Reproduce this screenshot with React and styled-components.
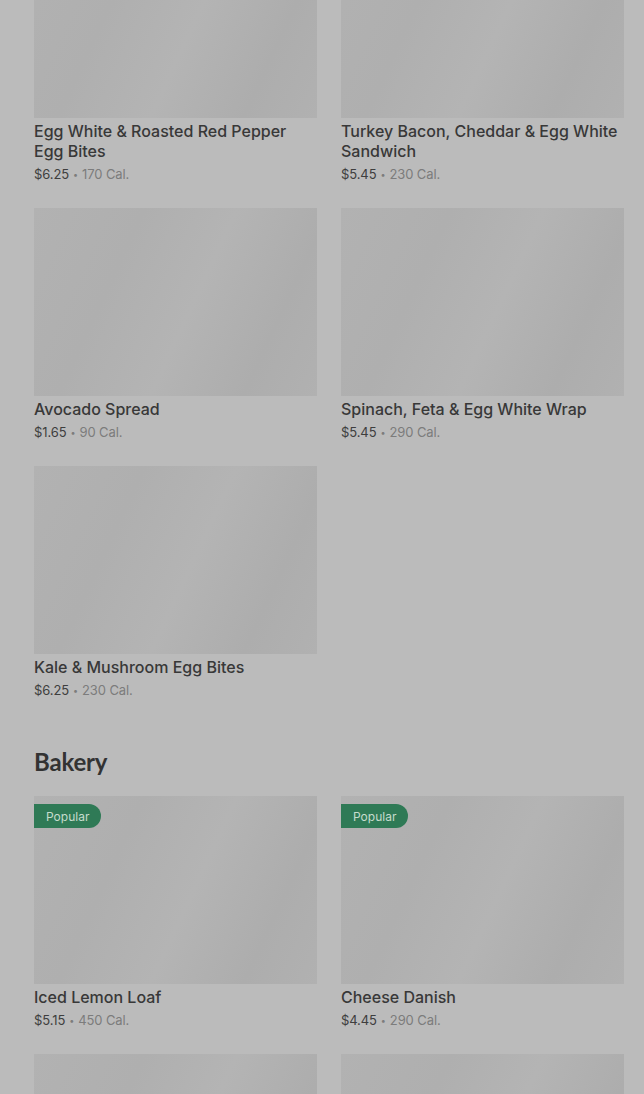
import styled, { createGlobalStyle } from 'styled-components';

const GlobalStyle = createGlobalStyle`
  html, body {
    margin: 0;
    padding: 0;
    background: #bbbbbb;
    overflow: hidden;
  }
`

const Page = styled.div`
  width: 644px;
  height: 1094px;
  overflow: hidden;
  background: #bbbbbb;
  font-family: Inter, "Noto Sans", sans-serif;
`

// the page is scrolled part way into the menu
const Scroller = styled.div`
  margin-top: -70px;
  padding: 0 20px 0 34px;
`

const Section = styled.section`
  & + & {
    margin-top: 46px;
  }
`

const SectionTitle = styled.h2`
  margin: 0 0 18px;
  font-family: Lato, Inter, sans-serif;
  font-weight: 700;
  font-size: 24px;
  line-height: 32px;
  color: #333333;
  letter-spacing: -0.2px;
`

const Grid = styled.div`
  display: grid;
  grid-template-columns: 283px 283px;
  column-gap: 24px;
  row-gap: 24px;
`

const Card = styled.div`
  display: flex;
  flex-direction: column;
`

const Thumb = styled.div`
  position: relative;
  height: 188px;
  background: linear-gradient(115deg, #b2b2b2 0%, #afafaf 30%, #b4b4b4 55%, #adadad 80%, #b1b1b1 100%);
`

const Badge = styled.span`
  position: absolute;
  top: 8px;
  left: 0;
  height: 24px;
  padding: 0 12px;
  display: flex;
  align-items: center;
  background: #2f7a56;
  color: #c6dccd;
  font-size: 12px;
  border-radius: 0 12px 12px 0;
`

const Name = styled.div`
  margin-top: 3px;
  font-size: 16px;
  font-weight: 500;
  line-height: 20px;
  color: #383838;
`

const Meta = styled.div`
  margin-top: 3px;
  height: 20px;
  display: flex;
  align-items: center;
  gap: 4px;
  font-size: 13px;
  color: #7c7c7c;
  letter-spacing: -0.1px;
`

const Price = styled.span`
  color: #3e3e3e;
`

const Dot = styled.span`
  font-size: 9px;
`

const breakfast = [
  { name: 'Egg White & Roasted Red Pepper Egg Bites', price: '$6.25', cal: 170 },
  { name: 'Turkey Bacon, Cheddar & Egg White Sandwich', price: '$5.45', cal: 230 },
  { name: 'Avocado Spread', price: '$1.65', cal: 90 },
  { name: 'Spinach, Feta & Egg White Wrap', price: '$5.45', cal: 290 },
  { name: 'Kale & Mushroom Egg Bites', price: '$6.25', cal: 230 },
]

const bakery = [
  { name: 'Iced Lemon Loaf', price: '$5.15', cal: 450, popular: true },
  { name: 'Cheese Danish', price: '$4.45', cal: 290, popular: true },
  { name: 'Butter Croissant', price: '$3.75', cal: 260 },
  { name: 'Chocolate Croissant', price: '$4.25', cal: 300 },
]

function MenuCard({ item }) {
  return (
    <Card>
      <Thumb>{item.popular && <Badge>Popular</Badge>}</Thumb>
      <Name>{item.name}</Name>
      <Meta>
        <Price>{item.price}</Price>
        <Dot>•</Dot>
        <span>{item.cal} Cal.</span>
      </Meta>
    </Card>
  )
}

export default function App() {
  return (
    <Page>
      <GlobalStyle />
      <Scroller>
        <Section>
          <Grid>
            {breakfast.map(item => <MenuCard key={item.name} item={item} />)}
          </Grid>
        </Section>
        <Section>
          <SectionTitle>Bakery</SectionTitle>
          <Grid>
            {bakery.map(item => <MenuCard key={item.name} item={item} />)}
          </Grid>
        </Section>
      </Scroller>
    </Page>
  )
}
